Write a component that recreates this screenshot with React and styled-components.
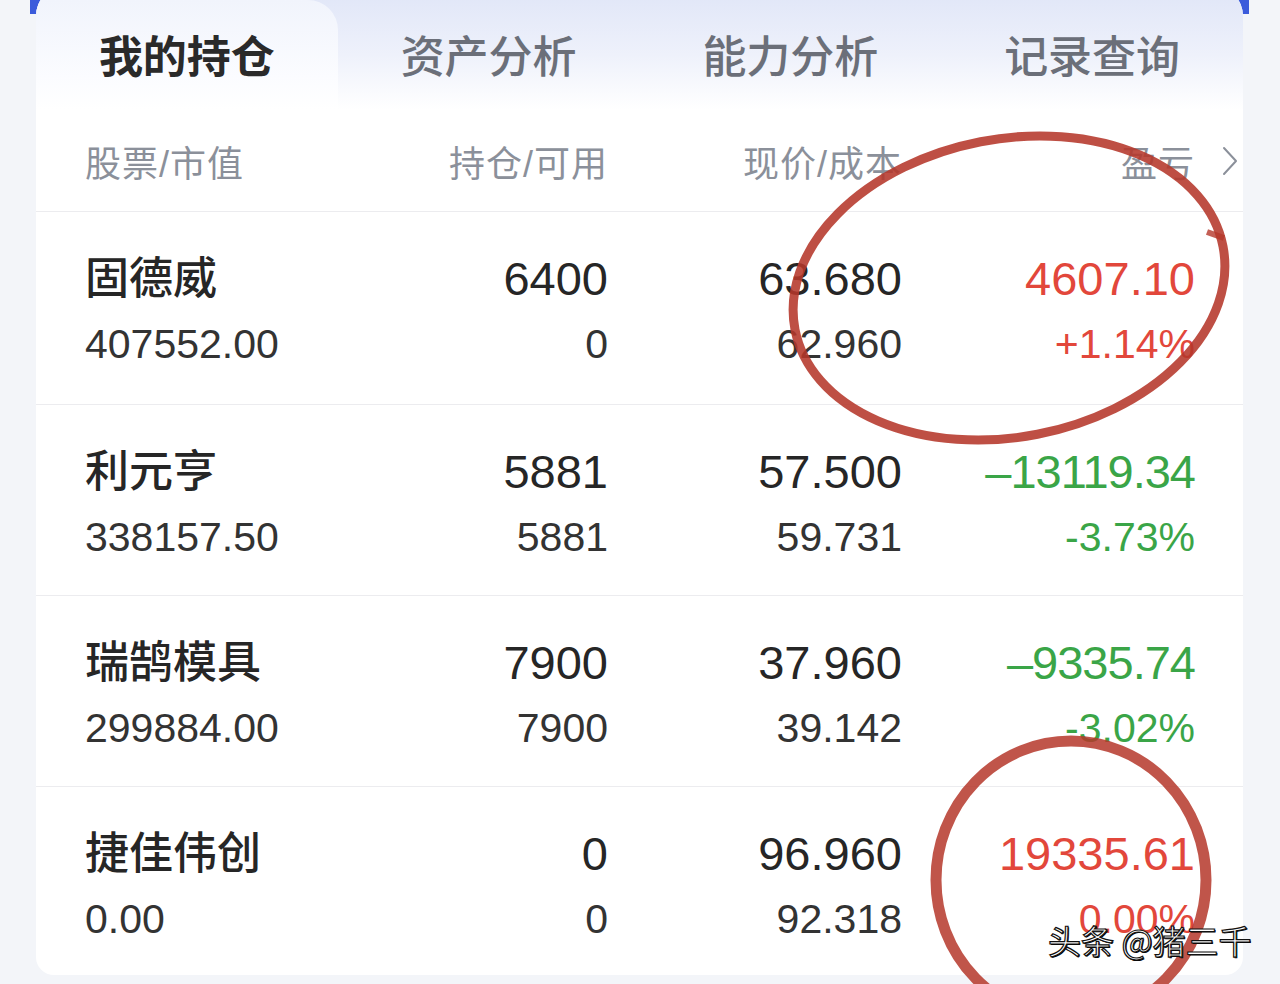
import React from 'react';
import styled, { createGlobalStyle } from 'styled-components';

const GlobalStyle = createGlobalStyle`
  body {
    margin: 0;
    background: #f3f5f9;
    font-family: "Liberation Sans", "Noto Sans CJK SC", sans-serif;
  }
`;

const Page = styled.div`
  position: relative;
  width: 1280px;
  height: 984px;
  overflow: hidden;
  background: #f3f5f9;
`;

const BlueEdge = styled.div`
  position: absolute;
  left: 30px;
  top: 0;
  width: 1219px;
  height: 14px;
  background: #3b5bdb;
`;

const Card = styled.div`
  position: relative;
  margin: -14px 0 0 36px;
  width: 1207px;
  height: 989px;
  background: #fff;
  border-radius: 30px 30px 18px 18px;
  overflow: hidden;
`;

const Tabs = styled.div`
  display: grid;
  grid-template-columns: repeat(4, 1fr);
  height: 124px;
  background: linear-gradient(180deg, #dfe5f7 0%, #eef1fb 55%, #ffffff 100%);
`;

const Tab = styled.div`
  display: flex;
  align-items: center;
  justify-content: center;
  margin-top: 14px;
  padding-bottom: 2px;
  font-size: 44px;
  font-weight: ${p => (p.active ? 600 : 500)};
  color: ${p => (p.active ? '#2a2a2a' : '#6b6f79')};
  border-radius: ${p => (p.active ? '0 30px 0 0' : '0')};
  background: ${p => (p.active ? 'linear-gradient(180deg, #f1f4fc 0%, #fbfcff 70%, #ffffff 100%)' : 'transparent')};
`;

const Grid = styled.div`
  display: grid;
  grid-template-columns: 230px 293px 294px 293px;
  padding: 0 48px 0 49px;
`;

const Header = styled(Grid)`
  height: 102px;
  box-sizing: border-box;
  align-items: center;
  border-bottom: 1px solid #ececef;
  font-size: 36px;
  letter-spacing: 1px;
  color: #8b909a;
`;

const HeadCell = styled.div`
  display: flex;
  align-items: center;
  justify-content: ${p => (p.left ? 'flex-start' : 'flex-end')};
`;

const Chevron = styled.svg`
  width: 18px;
  height: 30px;
  margin-left: 26px;
  margin-right: -44px;
`;

const Row = styled(Grid)`
  height: ${p => p.h}px;
  box-sizing: border-box;
  padding-top: 39px;
  border-bottom: ${p => (p.last ? 'none' : '1px solid #ececef')};
`;

const Cell = styled.div`
  display: flex;
  flex-direction: column;
  align-items: ${p => (p.left ? 'flex-start' : 'flex-end')};
`;

const Top = styled.div`
  font-size: ${p => (p.name ? '44px' : '47px')};
  font-weight: 500;
  line-height: 56px;
  letter-spacing: ${p => (p.tight ? '-1px' : '0')};
  color: ${p => p.color || '#262626'};
`;

const Bottom = styled.div`
  margin-top: 14px;
  font-size: 41px;
  line-height: 46px;
  color: ${p => p.color || '#333'};
`;

const Overlay = styled.svg`
  position: absolute;
  left: 0;
  top: 0;
  pointer-events: none;
`;

const Watermark = styled.div`
  position: absolute;
  left: 1048px;
  top: 916px;
  font-family: "Noto Sans CJK SC", sans-serif;
  font-size: 33px;
  color: #fff;
  -webkit-text-stroke: 1.2px #111;
  text-shadow: 1px 1px 0 #000;
`;

const RED = '#e2473b';
const GREEN = '#3aa547';

const rows = [
  { name: '固德威', value: '407552.00', hold: '6400', avail: '0', price: '63.680', cost: '62.960', pl: '4607.10', pct: '+1.14%', color: RED, h: 193 },
  { name: '利元亨', value: '338157.50', hold: '5881', avail: '5881', price: '57.500', cost: '59.731', pl: '–13119.34', pct: '-3.73%', color: GREEN, h: 191 },
  { name: '瑞鹄模具', value: '299884.00', hold: '7900', avail: '7900', price: '37.960', cost: '39.142', pl: '–9335.74', pct: '-3.02%', color: GREEN, h: 191 },
  { name: '捷佳伟创', value: '0.00', hold: '0', avail: '0', price: '96.960', cost: '92.318', pl: '19335.61', pct: '0.00%', color: RED, h: 188 },
];

export default function App() {
  return (
    <Page>
      <GlobalStyle />
      <BlueEdge />
      <Card>
        <Tabs>
          <Tab active>我的持仓</Tab>
          <Tab>资产分析</Tab>
          <Tab>能力分析</Tab>
          <Tab>记录查询</Tab>
        </Tabs>
        <Header>
          <HeadCell left>股票/市值</HeadCell>
          <HeadCell>持仓/可用</HeadCell>
          <HeadCell>现价/成本</HeadCell>
          <HeadCell>
            盈亏
            <Chevron viewBox="0 0 18 30">
              <path d="M3 2 L15 15 L3 28" fill="none" stroke="#8b909a" strokeWidth="2" strokeLinecap="round" strokeLinejoin="round" />
            </Chevron>
          </HeadCell>
        </Header>
        {rows.map((r, i) => (
          <Row key={r.name} h={r.h} last={i === rows.length - 1}>
            <Cell left>
              <Top name>{r.name}</Top>
              <Bottom>{r.value}</Bottom>
            </Cell>
            <Cell>
              <Top>{r.hold}</Top>
              <Bottom>{r.avail}</Bottom>
            </Cell>
            <Cell>
              <Top>{r.price}</Top>
              <Bottom>{r.cost}</Bottom>
            </Cell>
            <Cell>
              <Top color={r.color} tight={r.pl.startsWith('–')}>{r.pl}</Top>
              <Bottom color={r.color}>{r.pct}</Bottom>
            </Cell>
          </Row>
        ))}
      </Card>
      <Overlay width="1280" height="984" viewBox="0 0 1280 984">
        <ellipse cx="1009" cy="288" rx="218" ry="149" transform="rotate(-11 1009 288)" fill="none" stroke="#b5372a" strokeOpacity="0.88" strokeWidth="9" />
        <path d="M1207 232 L1224 238" stroke="#b5372a" strokeWidth="6" strokeOpacity="0.8" />
        <ellipse cx="1071" cy="880" rx="135" ry="139" fill="none" stroke="#b5372a" strokeOpacity="0.85" strokeWidth="11" />
      </Overlay>
      <Watermark>头条 @猪三千</Watermark>
    </Page>
  );
}
